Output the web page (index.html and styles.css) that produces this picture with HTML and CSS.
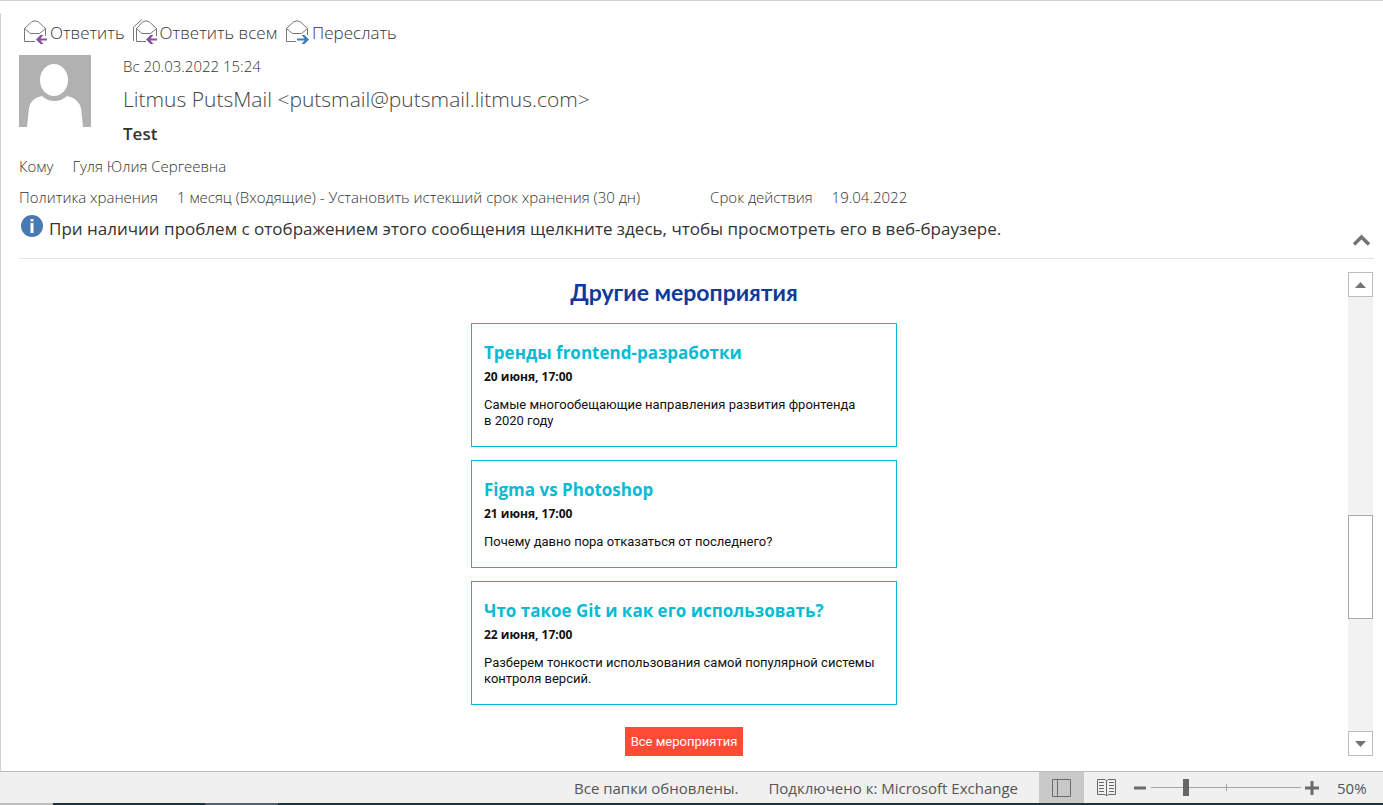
FILE: index.html
```html
<!DOCTYPE html>
<html lang="ru">
<head>
<meta charset="utf-8">
<title>Test</title>
<link rel="stylesheet" href="styles.css">
</head>
<body>
<div class="pane">
  <header class="head">
    <nav class="actions" aria-label="Действия">
      <button class="action" type="button">
        <svg class="action-icon" width="26" height="26" viewBox="0 2 26 26" fill="none">
          <path d="M13 24.500H2.500V11.500L9.500 5Q13 2.500 16.500 5L23.500 11.500V19M2.500 11.500L8.500 16.500H17.500L23.500 11.500" stroke="#777" />
          <path d="M14 22.500L18.500 18H21.500L18.500 21.500H25V23.500H18.500L21.500 27H18.500Z" fill="#8551a5" />
        </svg>
        Ответить
      </button>
      <button class="action" type="button">
        <svg class="action-icon" width="26" height="26" viewBox="0 2 26 26" fill="none">
          <path d="M14 24.500H4.500V11.500L10.500 5Q14 2.500 17.500 5L24.500 11.500V19M4.500 11.500L10 16.500H18.500L24.500 11.500" stroke="#777" />
          <path d="M1.500 24V10L10 2.500" stroke="#777" />
          <path d="M14 22.500L18.500 18H21.500L18.500 21.500H25V23.500H18.500L21.500 27H18.500Z" fill="#8551a5" />
        </svg>
        Ответить всем
      </button>
      <button class="action" type="button">
        <svg class="action-icon" width="26" height="26" viewBox="0 2 26 26" fill="none">
          <path d="M12 24.500H2.500V11.500L9.500 5Q13 2.500 16.500 5L23.500 11.500V18M2.500 11.500L8.500 16.500H17.500L23.500 11.500" stroke="#777" />
          <path d="M25 22.500L20.500 18H17.500L20.500 21.500H13V23.500H20.500L17.500 27H20.500Z" fill="#437db5" />
        </svg>
        Переслать
      </button>
    </nav>
    <div class="sender">
      <svg class="avatar" width="72" height="72" viewBox="0 0 72 72" role="img" aria-label="Фото отправителя">
        <path d="M0 0H72V72H0Z" fill="#b1b1b1" />
        <ellipse cx="35" cy="25" rx="14" ry="16" fill="#fff" />
        <path d="M8 72L10 53Q12 43 23 41Q28 46 35.500 46Q43 46 48 41Q59 43 62 53L64 72Z" fill="#fff" />
      </svg>
      <div class="sender-text">
        <time class="small" datetime="2022-03-20T15:24">Вс 20.03.2022 15:24</time>
        <div class="from">Litmus PutsMail &lt;putsmail@putsmail.litmus.com&gt;</div>
        <h1 class="subject">Test</h1>
      </div>
    </div>
    <dl class="meta small">
      <div class="pair"><dt>Кому</dt><dd>Гуля Юлия Сергеевна</dd></div>
    </dl>
    <dl class="meta small">
      <div class="pair"><dt>Политика хранения</dt><dd>1 месяц (Входящие) - Установить истекший срок хранения (30 дн)</dd></div>
      <div class="pair"><dt>Срок действия</dt><dd>19.04.2022</dd></div>
    </dl>
    <div class="info">
      <button class="info-link" type="button">
        <svg class="info-icon" width="22" height="22" viewBox="0 0 22 22">
          <circle cx="11" cy="11" r="11" fill="#477ab3" />
          <path d="M9.500 4H12.500V6.500H9.500ZM9.500 8H12.500V18H9.500Z" fill="#fff" />
        </svg>
        При наличии проблем с отображением этого сообщения щелкните здесь, чтобы просмотреть его в веб-браузере.
      </button>
      <button class="collapse" type="button" aria-label="Свернуть">
        <svg width="18" height="12" viewBox="0 0 18 12" fill="none"><path d="M2 10.500L9.500 3L17 10.500" stroke="#737373" stroke-width="3.500" /></svg>
      </button>
    </div>
  </header>
  <div class="body">
    <main class="letter">
      <h2 class="letter-title">Другие мероприятия</h2>
      <article class="card">
        <h3 class="card-title">Тренды frontend-разработки</h3>
        <p class="card-date">20 июня, 17:00</p>
        <p class="card-text">Самые многообещающие направления развития фронтенда в&nbsp;2020&nbsp;году</p>
      </article>
      <article class="card">
        <h3 class="card-title">Figma vs Photoshop</h3>
        <p class="card-date">21 июня, 17:00</p>
        <p class="card-text">Почему давно пора отказаться от последнего?</p>
      </article>
      <article class="card">
        <h3 class="card-title">Что такое Git и как его использовать?</h3>
        <p class="card-date">22 июня, 17:00</p>
        <p class="card-text">Разберем тонкости использования самой популярной системы контроля версий.</p>
      </article>
      <a class="cta" href="#">Все мероприятия</a>
    </main>
    <div class="scroll">
      <button class="scroll-btn" type="button" aria-label="Вверх"><svg width="11" height="6" viewBox="0 0 11 6"><path d="M0 6L5.500 0L11 6Z" fill="#737373" /></svg></button>
      <div class="scroll-track"><div class="scroll-thumb"></div></div>
      <button class="scroll-btn" type="button" aria-label="Вниз"><svg width="11" height="6" viewBox="0 0 11 6"><path d="M0 0L5.500 6L11 0Z" fill="#737373" /></svg></button>
    </div>
  </div>
</div>
<footer class="status">
  <span class="folders">Все папки обновлены.</span>
  <span class="server">Подключено к: Microsoft Exchange</span>
  <button class="view view-on" type="button" aria-label="Обычный">
    <svg width="19" height="18" viewBox="0 0 19 18" fill="none" stroke="#6a6a6a"><path d="M.5.5H18.500V17.500H.5ZM5.500.5V17.500" /></svg>
  </button>
  <button class="view" type="button" aria-label="Чтение">
    <svg width="19" height="18" viewBox="0 0 19 18" fill="none" stroke="#6a6a6a"><path d="M9.500 2L8 .5H.5V15.500H8L9.500 17L11 15.500H18.500V.5H11L9.500 2V17M2 3.500H7M2 6.500H7M2 9.500H7M2 12.500H7M12 3.500H17M12 6.500H17M12 9.500H17M12 12.500H17" /></svg>
  </button>
  <button class="zoom-btn" type="button" aria-label="Уменьшить"><svg width="14" height="14" viewBox="0 0 14 14"><path d="M1 5.500H13V8.500H1Z" fill="#6a6a6a" /></svg></button>
  <input class="zoom-range" type="range" min="0" max="150" value="33" aria-label="Масштаб">
  <button class="zoom-btn" type="button" aria-label="Увеличить"><svg width="14" height="14" viewBox="0 0 14 14"><path d="M0 5.500H5.500V0H8.500V5.500H14V8.500H8.500V14H5.500V8.500H0Z" fill="#6a6a6a" /></svg></button>
  <span class="percent">50%</span>
</footer>
<div class="taskbar"><span class="task-start"></span><span class="task-gap"></span><span class="task-active"></span></div>
</body>
</html>
```
FILE: styles.css
```css
* { box-sizing: border-box; }

body {
  margin: 0;
  min-height: 100vh;
  display: flex;
  flex-direction: column;
  background: #fff;
  color: #555;
  font-family: "Open Sans", "Noto Sans", sans-serif;
  font-size: 17px;
  border-top: 1px solid #d2d2d2;
}

button {
  margin: 0;
  padding: 0;
  border: 0;
  background: none;
  color: inherit;
  font: inherit;
}

svg { display: block; flex: none; }

h1, h2, h3, p, dl, dd { margin: 0; }

.pane {
  flex: 1;
  display: flex;
  flex-direction: column;
  margin-top: 12px;
  border-left: 1px solid #d2d2d2;
}

.head {
  margin: 0 9px 0 18px;
  padding-bottom: 12px;
  border-bottom: 1px solid #e3e3e3;
}

.actions { display: flex; gap: 7px; padding: 4px 0 0 3px; }

.action { display: flex; align-items: center; gap: 2px; height: 30px; font-weight: 300; color: #333; white-space: nowrap; }

.sender { display: flex; gap: 32px; margin-top: 8px; }

.sender-text { display: flex; flex-direction: column; }

.small { color: #333; font-size: 15px; font-weight: 300; line-height: 22px; }

.from { color: #444; font-size: 21px; font-weight: 300; line-height: 44px; }

.subject { color: #333; font-size: 17px; font-weight: 600; line-height: 26px; }

.meta { display: flex; gap: 70px; margin-top: 9px; white-space: nowrap; }
.sender + .meta { margin-top: 8px; }

.pair { display: flex; gap: 19px; }

.info { display: flex; justify-content: space-between; align-items: flex-start; margin-top: 7px; }

.info-link { display: flex; gap: 6px; padding-left: 2px; color: #333; line-height: 28px; text-align: left; }

.collapse { padding: 19px 4px 0 0; }

.body { flex: 1; display: flex; padding: 13px 10px 15px 19px; }

.letter {
  flex: 1;
  display: flex;
  flex-direction: column;
  align-items: center;
  color: #111;
}

.letter-title { margin: 4px 0 15px; color: #0e3a9b; font-family: Lato, "Open Sans", sans-serif; font-size: 23px; font-weight: 700; line-height: 32px; }

.card {
  width: 100%;
  max-width: 426px;
  margin-bottom: 13px;
  padding: 17px 12px;
  border: 1px solid #08bad4;
}

.card-title { color: #08bad4; font-size: 17px; font-weight: 700; line-height: 24px; }

.card-date { margin-top: 2px; font-size: 12px; font-weight: 700; line-height: 20px; }

.card-text { margin-top: 10px; font-family: Roboto, "Open Sans", sans-serif; font-size: 13px; line-height: 16px; }

.cta {
  margin-top: 9px;
  padding: 6px;
  background: #ff4b35;
  color: #fff;
  font-family: Roboto, "Open Sans", sans-serif;
  font-size: 13px;
  line-height: 17px;
  text-decoration: none;
}

.scroll { display: flex; flex-direction: column; width: 25px; background: #f2f2f2; }

.scroll-btn {
  display: flex;
  justify-content: center;
  align-items: center;
  height: 25px;
  background: #fff;
  border: 1px solid #bdbdbd;
}

.scroll-track { flex: 1; display: grid; grid-template-rows: 218fr 104fr 112fr; }

.scroll-thumb { grid-row: 2; background: #fff; border: 1px solid #a9a9a9; }

.status {
  display: flex;
  align-items: center;
  justify-content: flex-end;
  height: 32px;
  padding-right: 14px;
  border-top: 1px solid #bdbdbd;
  background: #f0f0f0;
  color: #555;
  font-size: 15px;
  white-space: nowrap;
}

.folders { margin-right: 30px; }
.server { margin-right: 21px; }

.view { display: flex; justify-content: center; align-items: center; width: 45px; height: 31px; }

.view-on { background: #c9c9c9; }

.zoom-btn { margin: 0 4px; }

.zoom-range {
  width: 150px;
  height: 18px;
  margin: 0;
  appearance: none;
  background:
    linear-gradient(#a5a5a5, #a5a5a5) center / 1px 7px no-repeat,
    linear-gradient(#a5a5a5, #a5a5a5) center / 100% 1px no-repeat;
}

.zoom-range::-webkit-slider-thumb { appearance: none; width: 6px; height: 17px; background: #666; }

.percent { min-width: 32px; margin-left: 14px; }

.taskbar { display: flex; height: 2px; background: #1d3440; }
.task-start { width: 53px; background: #bfbfbf; }
.task-gap { width: 152px; }
.task-active { width: 73px; background: #52616b; }
```
